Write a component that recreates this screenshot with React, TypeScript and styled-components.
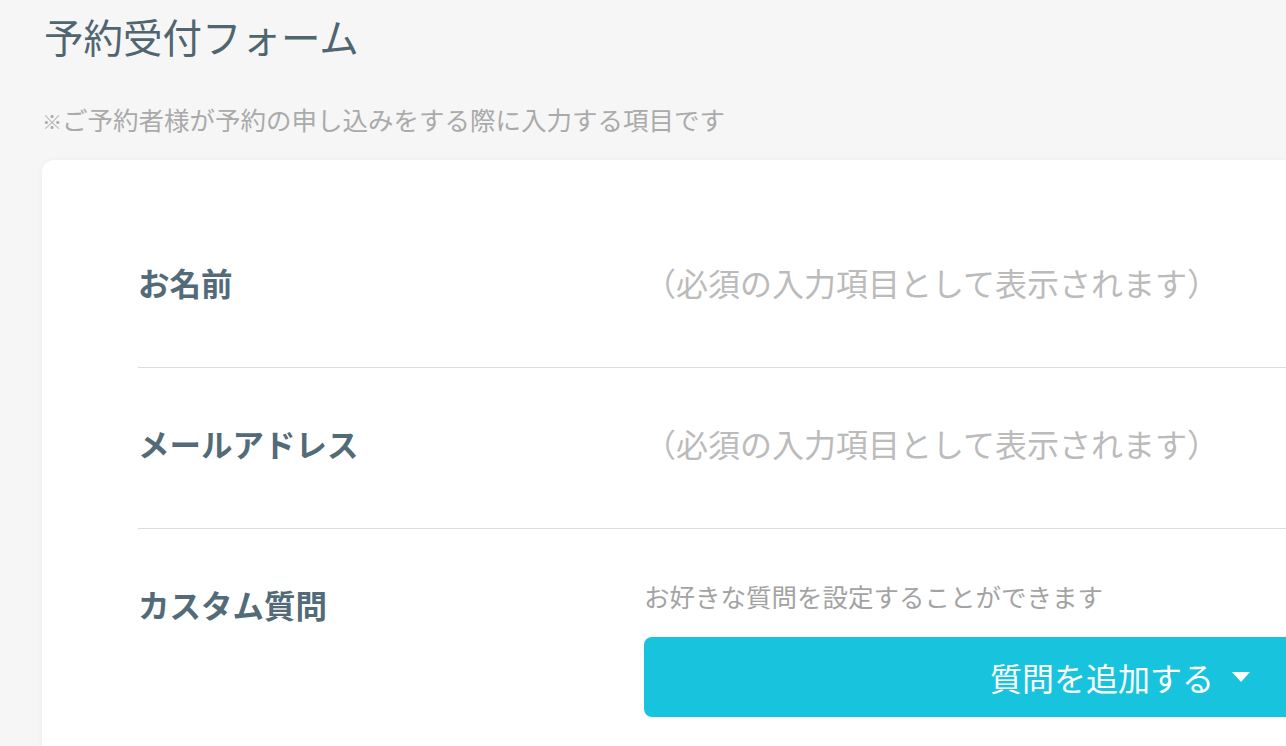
import styled, { createGlobalStyle } from 'styled-components';

const GlobalStyle = createGlobalStyle`
  html, body {
    margin: 0;
    padding: 0;
    background: #f6f6f6;
    overflow: hidden;
    font-family: 'Noto Sans CJK JP', 'Noto Sans', sans-serif;
  }
`;

type Field = { label: string; note: string };

const fixedFields: Field[] = [
  { label: 'お名前', note: '（必須の入力項目として表示されます）' },
  { label: 'メールアドレス', note: '（必須の入力項目として表示されます）' },
];

function App() {
  return (
    <>
      <GlobalStyle />
      <Styled.Page>
        <Styled.Title>予約受付フォーム</Styled.Title>
        <Styled.Lead>
          <small>※</small>ご予約者様が予約の申し込みをする際に入力する項目です
        </Styled.Lead>
        <Styled.Card>
          {fixedFields.map((f) => (
            <Styled.Row key={f.label}>
              <Styled.Label>{f.label}</Styled.Label>
              <Styled.Note>{f.note}</Styled.Note>
            </Styled.Row>
          ))}
          <Styled.Row $top>
            <Styled.Label>カスタム質問</Styled.Label>
            <Styled.Column>
              <Styled.Hint>お好きな質問を設定することができます</Styled.Hint>
              <Styled.AddButton type="button">
                質問を追加する
                <Styled.Caret />
              </Styled.AddButton>
            </Styled.Column>
          </Styled.Row>
        </Styled.Card>
      </Styled.Page>
    </>
  );
}

export default App;

const Styled = {
  Page: styled.main`
    display: flex;
    flex-direction: column;
    padding: 8px 0 0 42px;
    height: 746px;
    box-sizing: border-box;
  `,
  Title: styled.h1`
    margin: 0 0 0 2px;
    font-size: 39.5px;
    font-weight: 400;
    line-height: 56px;
    color: #4f6570;
  `,
  Lead: styled.p`
    margin: 41px 0 0;
    font-size: 25.5px;
    line-height: 28px;
    color: #aaaaaa;

    small {
      font-size: 20px;
    }
  `,
  Card: styled.section`
    width: 1360px;
    margin-top: 24px;
    padding: 47px 96px 60px;
    box-sizing: border-box;
    background: #ffffff;
    border-radius: 12px;
    box-shadow: 0 0 6px rgba(0, 0, 0, 0.04);
  `,
  Row: styled.div<{ $top?: boolean }>`
    display: flex;
    align-items: ${(p) => (p.$top ? 'flex-start' : 'center')};
    min-height: 161px;
    padding: ${(p) => (p.$top ? '55px 0 0' : '0 0 10px')};
    box-sizing: border-box;
    border-bottom: 1px solid #dddddd;

    &:last-child {
      border-bottom: none;
    }
  `,
  Label: styled.div`
    flex: 0 0 506px;
    font-size: 31.5px;
    font-weight: 700;
    line-height: 40px;
    color: #536b78;
  `,
  Note: styled.div`
    flex: 1;
    font-size: 32px;
    line-height: 40px;
    color: #bbbbbb;
  `,
  Column: styled.div`
    flex: 1;
    display: flex;
    flex-direction: column;
  `,
  Hint: styled.div`
    font-size: 25.5px;
    line-height: 24px;
    color: #a3a3a3;
  `,
  AddButton: styled.button`
    display: flex;
    align-items: center;
    justify-content: flex-end;
    gap: 18px;
    height: 80px;
    margin-top: 29px;
    padding: 0 56px 0 0;
    border: none;
    border-radius: 8px;
    background: #17c3dd;
    color: #ffffff;
    font-family: inherit;
    font-size: 32px;
    cursor: pointer;
  `,
  Caret: styled.span`
    width: 0;
    height: 0;
    border-left: 9px solid transparent;
    border-right: 9px solid transparent;
    border-top: 10px solid #ffffff;
  `,
};
